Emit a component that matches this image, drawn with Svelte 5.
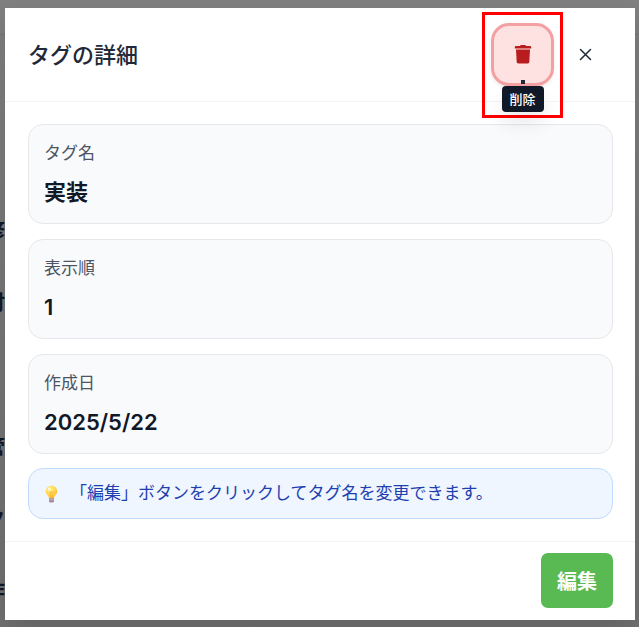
<script lang="ts">
  interface Field {
    label: string;
    value: string;
  }

  const fields: Field[] = [
    { label: "タグ名", value: "実装" },
    { label: "表示順", value: "1" },
    { label: "作成日", value: "2025/5/22" },
  ];

  // Rows of the tag list that stay visible beside the dialog
  const rows = ["修", "討", "", "管", "ク", "作"];
</script>

<div class="page">
  <div class="backdrop" aria-hidden="true">
    <div class="topbar"></div>
    {#each rows as row}
      <div class="row"><span>{row}</span></div>
    {/each}
  </div>

  <div class="dialog" role="dialog" aria-modal="true" aria-labelledby="dialog-title">
    <header>
      <h2 id="dialog-title">タグの詳細</h2>
      <div class="actions">
        <div class="highlight">
          <button class="delete" type="button" aria-describedby="delete-tip" aria-label="削除">
            <svg width="18" height="20" viewBox="0 0 18 20" aria-hidden="true">
              <path d="M.8 3.2Q.8 2 2 2H5.8L6.4 1.3Q6.7 1 7.1 1H10.9Q11.3 1 11.6 1.3L12.2 2H16Q17.2 2 17.2 3.2V4.4H.8Z" />
              <path d="M2 5.6H16L15.3 18Q15.2 19.4 13.8 19.4H4.2Q2.8 19.4 2.7 18Z" />
            </svg>
          </button>
          <span class="tooltip" id="delete-tip" role="tooltip">削除</span>
        </div>
        <button class="close" type="button" aria-label="閉じる">
          <svg width="13" height="13" viewBox="0 0 13 13" aria-hidden="true">
            <path d="M1.5 1.5L11.5 11.5M11.5 1.5L1.5 11.5" />
          </svg>
        </button>
      </div>
    </header>

    <div class="body">
      <dl>
        {#each fields as field}
          <div class="card">
            <dt>{field.label}</dt>
            <dd>{field.value}</dd>
          </div>
        {/each}
      </dl>

      <p class="hint">
        <svg width="16" height="18" viewBox="0 0 16 18" aria-hidden="true">
          <defs>
            <radialGradient id="glow" cx="0.4" cy="0.3" r="0.75">
              <stop offset="0" stop-color="#fff19b" />
              <stop offset="0.6" stop-color="#ffd447" />
              <stop offset="1" stop-color="#f8b52f" />
            </radialGradient>
          </defs>
          <path d="M7.5 .5A5.8 5.8 0 0 0 1.7 6.3C1.7 9.2 4.6 10.2 5 13.5H10C10.4 10.2 13.3 9.2 13.3 6.3A5.8 5.8 0 0 0 7.5 .5Z" fill="url(#glow)" />
          <path d="M5.5 6.4L6.7 8L7.5 6.6L8.3 8L9.5 6.4M6.7 8V13M8.3 8V13" fill="none" stroke="#f3a72b" stroke-width="0.6" />
          <ellipse cx="5.2" cy="4" rx="1.2" ry="1.6" fill="#fffbd8" />
          <path d="M5 13.2H10V16.4L9 17.6H6L5 16.4Z" fill="#a38a9c" />
          <path d="M5 14.8H10" stroke="#d2c4ce" stroke-width="0.7" />
        </svg>
        <span>「編集」ボタンをクリックしてタグ名を変更できます。</span>
      </p>
    </div>

    <footer>
      <button class="edit" type="button">編集</button>
    </footer>
  </div>
</div>

<style>
  :global(body) {
    margin: 0;
    background: #808080;
  }

  .page {
    position: relative;
    box-sizing: border-box;
    min-height: 100vh;
    padding: 8px 4px 7px 5px;
    overflow: hidden;
    font-family: Inter, "Noto Sans CJK JP", sans-serif;
    color: #111827;
    background: linear-gradient(#808080, #777777 50%, #717171);
  }

  .backdrop {
    position: absolute;
    inset: 0;
  }

  .topbar {
    box-sizing: border-box;
    height: 35px;
    margin-bottom: 158px;
    border-bottom: 1px solid #757575;
  }

  .row {
    display: flex;
    justify-content: flex-end;
    align-items: center;
    width: 5px;
    height: 72px;
    overflow: hidden;
    font-size: 20px;
    font-weight: 600;
  }

  .dialog {
    position: relative;
    background: #ffffff;
    box-shadow: 0 12px 28px rgba(0, 0, 0, 0.14);
  }

  header {
    display: flex;
    align-items: center;
    justify-content: space-between;
    box-sizing: border-box;
    height: 94px;
    padding: 0 27px 0 23px;
    border-bottom: 1px solid #f3f4f6;
  }

  h2 {
    margin: 0;
    font-size: 22px;
    font-weight: 500;
    line-height: 32px;
    color: #1f2937;
  }

  .actions {
    display: flex;
    align-items: center;
  }

  .highlight {
    position: relative;
    z-index: 1;
    display: flex;
    align-items: flex-start;
    justify-content: center;
    box-sizing: border-box;
    width: 81px;
    height: 106px;
    margin-top: 20px;
    padding-top: 8px;
    border: 3px solid #ff0000;
  }

  button {
    display: flex;
    align-items: center;
    justify-content: center;
    padding: 0;
    border: 0;
    font-family: inherit;
    cursor: pointer;
  }

  .delete {
    width: 63px;
    height: 63px;
    border: 3px solid #f4a0a3;
    border-radius: 18px;
    background: #fee2e2;
    box-shadow: 0 2px 4px rgba(0, 0, 0, 0.08);
  }

  .delete svg {
    fill: #b91c1c;
  }

  .tooltip {
    position: absolute;
    top: 71px;
    left: 50%;
    padding: 3px 8px;
    border-radius: 4px;
    transform: translateX(-50%);
    font-size: 13px;
    font-weight: 500;
    line-height: 20px;
    white-space: nowrap;
    color: #ffffff;
    background: #111827;
    box-shadow: 0 12px 18px rgba(0, 0, 0, 0.08);
  }

  .tooltip::before {
    content: "";
    position: absolute;
    top: -6px;
    left: 50%;
    width: 4px;
    height: 4px;
    margin-left: -2px;
    background: #1f2937;
  }

  .close {
    width: 45px;
    height: 45px;
    background: transparent;
  }

  .close svg {
    fill: none;
    stroke: #1f2937;
    stroke-width: 1.5;
    stroke-linecap: round;
  }

  .body {
    padding: 22px 22px 22px 23px;
  }

  dl {
    display: grid;
    gap: 15px;
    margin: 0 0 14px;
  }

  .card {
    padding: 13px 15px;
    border: 1px solid #e5e7eb;
    border-radius: 15px;
    background: #f9fafb;
  }

  dt {
    font-size: 17px;
    line-height: 30px;
    color: #4b5563;
  }

  dd {
    margin: 6px 0 0;
    font-size: 22px;
    font-weight: 600;
    line-height: 36px;
  }

  .hint {
    display: flex;
    align-items: center;
    gap: 10px;
    margin: 0;
    padding: 11px 15px;
    border: 1px solid #bfdbfe;
    border-radius: 15px;
    font-size: 17px;
    line-height: 27px;
    color: #1e40af;
    background: #eff6ff;
  }

  .hint svg {
    flex: none;
  }

  footer {
    display: flex;
    justify-content: flex-end;
    padding: 11px 22px 12px;
    border-top: 1px solid #f3f4f6;
  }

  .edit {
    width: 72px;
    height: 55px;
    border-radius: 7px;
    font-size: 20px;
    font-weight: 600;
    color: #ffffff;
    background: #59b952;
  }
</style>
